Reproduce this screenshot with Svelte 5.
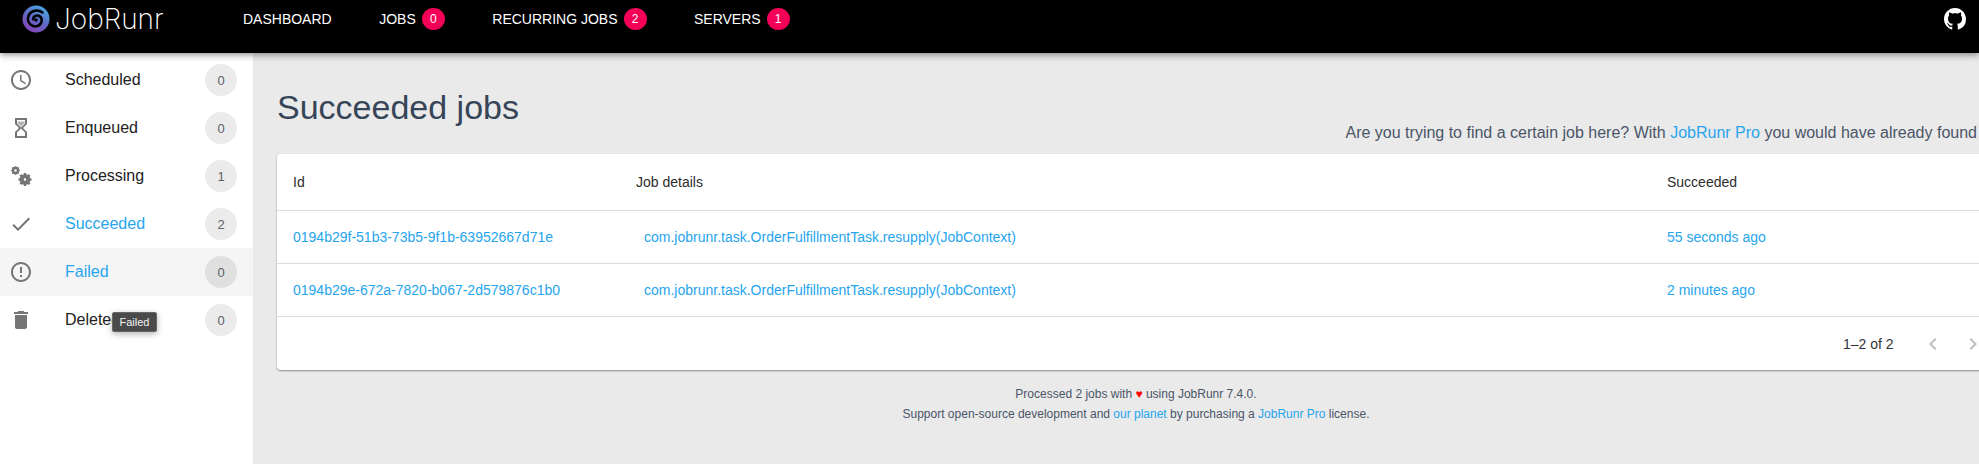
<script>
  const nav = [
    { label: 'DASHBOARD' },
    { label: 'JOBS', count: 0 },
    { label: 'RECURRING JOBS', count: 2 },
    { label: 'SERVERS', count: 1 }
  ];
  const side = [
    { label: 'Scheduled', count: 0, icon: 'clock' },
    { label: 'Enqueued', count: 0, icon: 'hourglass' },
    { label: 'Processing', count: 1, icon: 'cogs' },
    { label: 'Succeeded', count: 2, icon: 'check', active: true },
    { label: 'Failed', count: 0, icon: 'alert', active: true, hover: true },
    { label: 'Deleted', count: 0, icon: 'trash' }
  ];
  const rows = [
    { id: '0194b29f-51b3-73b5-9f1b-63952667d71e', when: '55 seconds ago' },
    { id: '0194b29e-672a-7820-b067-2d579876c1b0', when: '2 minutes ago' }
  ];
</script>

<div class="page">
  <header class="top">
    <div class="logo">
      <svg width="28" height="28" viewBox="0 0 28 28" fill="none">
        <defs>
          <linearGradient id="lg" x1="0.2" y1="1" x2="0.8" y2="0">
            <stop offset="0" stop-color="#8a3fb5" />
            <stop offset="0.5" stop-color="#5f68c4" />
            <stop offset="1" stop-color="#45aee6" />
          </linearGradient>
        </defs>
        <circle cx="14" cy="14" r="13.5" fill="url(#lg)" />
        <path d="M20.500 7.500C15.500 3.500 6.800 5.500 6 13c-.6 6 5 9.500 9.500 8 4.500-1.500 5.500-7 2.500-9.500-2.700-2.300-7-.5-6.800 2.800" stroke="#000" stroke-width="2.500" stroke-linecap="round" />
        <circle cx="14" cy="15" r="1.700" fill="#000" />
      </svg>
      <span class="wordmark">JobRunr</span>
    </div>
    <nav class="nav">
      {#each nav as n}
        <span class="navitem">{n.label}{#if n.count !== undefined}<span class="pill">{n.count}</span>{/if}</span>
      {/each}
    </nav>
    <svg class="gh" width="22" height="22" viewBox="0 0 16 16" fill="#fff"><path d="M8 0C3.58 0 0 3.58 0 8c0 3.54 2.29 6.53 5.47 7.59.4.07.55-.17.55-.38 0-.19-.01-.82-.01-1.49-2.01.37-2.53-.49-2.69-.94-.09-.23-.48-.94-.82-1.13-.28-.15-.68-.52-.01-.53.63-.01 1.08.58 1.23.82.72 1.21 1.87.87 2.33.66.07-.52.28-.87.51-1.07-1.78-.2-3.64-.89-3.64-3.95 0-.87.31-1.59.82-2.15-.08-.2-.36-1.02.08-2.12 0 0 .67-.21 2.2.82.64-.18 1.32-.27 2-.27s1.36.09 2 .27c1.53-1.04 2.2-.82 2.2-.82.44 1.1.16 1.92.08 2.12.51.56.82 1.27.82 2.15 0 3.07-1.87 3.75-3.65 3.95.29.25.54.73.54 1.48 0 1.07-.01 1.93-.01 2.2 0 .21.15.46.55.38A8.01 8.01 0 0 0 16 8c0-4.42-3.58-8-8-8z"/></svg>
  </header>

  <div class="body">
    <aside class="drawer">
      {#each side as s}
        <div class="item" class:hover={s.hover}>
          <span class="ico">
            {#if s.icon === 'clock'}
              <svg width="24" height="24" viewBox="0 0 24 24" fill="#757575"><path d="M11.99 2C6.47 2 2 6.48 2 12s4.47 10 9.99 10C17.52 22 22 17.52 22 12S17.52 2 11.99 2zM12 20c-4.42 0-8-3.58-8-8s3.58-8 8-8 8 3.58 8 8-3.58 8-8 8zm.5-13H11v6l5.25 3.15.75-1.23-4.5-2.67z"/></svg>
            {:else if s.icon === 'hourglass'}
              <svg width="24" height="24" viewBox="0 0 24 24" fill="#757575"><path d="M6 2v6h.01L6 8.01 10 12l-4 4 .01.01H6V22h12v-5.99h-.01L18 16l-4-4 4-3.99-.01-.01H18V2H6zm10 14.500V20H8v-3.500l4-4 4 4zm-4-5-4-4V4h8v3.500l-4 4z"/><path d="M8.500 5.500h7v1.500L12 10.500 8.500 7z" opacity=".55"/></svg>
            {:else if s.icon === 'cogs'}
              <svg width="24" height="24" viewBox="0 0 24 24" fill="#757575"><circle cx="6.500" cy="6.500" r="2.500" fill="none" stroke="#757575" stroke-width="2.400"/><path d="M6.500 2.200v1.500M6.500 9.300v1.500M2.200 6.500h1.500M9.300 6.500h1.500M3.400 3.400l1.100 1.100M8.500 8.500l1.100 1.100M3.400 9.600l1.100-1.100M8.500 4.500l1.100-1.100" stroke="#757575" stroke-width="1.700"/><circle cx="16" cy="15.500" r="3.300" fill="none" stroke="#757575" stroke-width="4"/><path d="M16 9v2.400M16 19.600V22M9.500 15.500h2.400M20.100 15.500h2.400M11.400 10.900l1.700 1.700M18.900 18.400l1.700 1.700M11.400 20.100l1.700-1.700M18.900 12.600l1.700-1.700" stroke="#757575" stroke-width="2.600"/></svg>
            {:else if s.icon === 'check'}
              <svg width="24" height="24" viewBox="0 0 24 24" fill="#757575"><path d="M9 16.170 4.830 12l-1.420 1.410L9 19 21 7l-1.410-1.410z"/></svg>
            {:else if s.icon === 'alert'}
              <svg width="24" height="24" viewBox="0 0 24 24" fill="#757575"><path d="M11 15h2v2h-2zm0-8h2v6h-2zm.99-5C6.470 2 2 6.480 2 12s4.470 10 9.990 10C17.520 22 22 17.520 22 12S17.520 2 11.990 2zM12 20c-4.420 0-8-3.580-8-8s3.580-8 8-8 8 3.580 8 8-3.580 8-8 8z"/></svg>
            {:else}
              <svg width="24" height="24" viewBox="0 0 24 24" fill="#757575"><path d="M6 19c0 1.100.9 2 2 2h8c1.100 0 2-.9 2-2V7H6v12zM19 4h-3.500l-1-1h-5l-1 1H5v2h14V4z"/></svg>
            {/if}
          </span>
          <span class="lbl" class:active={s.active}>{s.label}</span>
          <span class="cnt">{s.count}</span>
          {#if s.hover}<span class="tip">Failed</span>{/if}
        </div>
      {/each}
    </aside>

    <main class="main">
      <div class="head">
        <h1>Succeeded jobs</h1>
        <p class="promo">Are you trying to find a certain job here? With <a href="#p">JobRunr Pro</a> you would have already found</p>
      </div>
      <section class="card">
        <div class="row th">
          <span class="c1">Id</span><span class="c2">Job details</span><span class="c3">Succeeded</span>
        </div>
        {#each rows as r}
          <div class="row td">
            <span class="c1">{r.id}</span>
            <span class="c2 ind">com.jobrunr.task.OrderFulfillmentTask.resupply(JobContext)</span>
            <span class="c3">{r.when}</span>
          </div>
        {/each}
        <div class="pager">
          <span>1–2 of 2</span>
          <svg class="ch" width="24" height="24" viewBox="0 0 24 24" fill="#bdbdbd"><path d="M15.410 7.410 14 6l-6 6 6 6 1.410-1.410L10.830 12z"/></svg>
          <svg class="ch2" width="24" height="24" viewBox="0 0 24 24" fill="#bdbdbd"><path d="M10 6 8.590 7.410 13.170 12l-4.580 4.590L10 18l6-6z"/></svg>
        </div>
      </section>
      <footer class="foot">
        <div>Processed 2 jobs with <span class="heart">♥</span> using JobRunr 7.4.0.</div>
        <div>Support open-source development and <a href="#o">our planet</a> by purchasing a <a href="#j">JobRunr Pro</a> license.</div>
      </footer>
    </main>
  </div>
</div>

<style>
  :global(body) { margin: 0; overflow: hidden; }
  .page { width: 1979px; height: 464px; display: flex; flex-direction: column; font-family: "Liberation Sans", Arial, sans-serif; background: #eaeaea; overflow: hidden; }
  .top { position: relative; z-index: 3; height: 53px; flex: none; background: #000; color: #fff; display: flex; align-items: flex-start; box-shadow: 0 2px 4px -1px rgba(0,0,0,.2), 0 4px 5px rgba(0,0,0,.14), 0 1px 10px rgba(0,0,0,.12); }
  .logo { display: flex; align-items: center; margin: 5px 0 0 22px; width: 221px; gap: 5px; }
  .wordmark { font-family: "Inter", sans-serif; font-weight: 200; font-size: 28px; line-height: 28px; color: #fff; }
  .nav { display: flex; gap: 47.5px; margin-top: 8px; }
  .navitem { display: flex; align-items: center; font-size: 14px; height: 22px; gap: 6px; }
  .pill { width: 23px; height: 22px; border-radius: 50%; background: #f50057; color: #fff; font-size: 12px; display: flex; align-items: center; justify-content: center; }
  .gh { position: absolute; right: 13px; top: 8px; }
  .body { flex: 1; display: flex; min-height: 0; }
  .drawer { width: 253px; flex: none; background: #fff; padding-top: 3px; }
  .item { position: relative; height: 48px; display: flex; align-items: center; }
  .item.hover { background: #f5f5f5; }
  .ico { width: 65px; flex: none; display: flex; padding-left: 9px; box-sizing: border-box; }
  .lbl { flex: 1; font-size: 16px; color: #212121; }
  .lbl.active { color: #26a5ee; }
  .cnt { width: 32px; height: 32px; border-radius: 50%; background: #ebebeb; color: #616161; font-size: 13px; display: flex; align-items: center; justify-content: center; margin-right: 16px; }
  .item.hover .cnt { background: #e0e0e0; }
  .tip { position: absolute; left: 112px; top: 64px; width: 43px; height: 18px; background: #4a4a4a; border: 1px solid #666; color: #f2f2f2; font-size: 11px; display: flex; align-items: center; justify-content: center; border-radius: 2px; box-shadow: 0 2px 6px rgba(0,0,0,.3); z-index: 2; }
  .main { flex: 1; min-width: 0; padding-left: 24px; box-sizing: border-box; overflow: hidden; }
  .head { height: 101px; display: flex; justify-content: space-between; align-items: flex-end; padding-right: 2px; }
  h1 { margin: 0 0 27px; font-size: 34px; font-weight: 400; line-height: 40px; color: #374558; white-space: nowrap; }
  .promo { margin: 0 0 11px; white-space: nowrap; font-size: 16px; line-height: 20px; color: #4a5568; }
  .promo a, .foot a { color: #26a5ee; text-decoration: none; }
  .card { width: 1720px; background: #fff; border-radius: 4px 0 0 4px; box-shadow: 0 1px 2px rgba(0,0,0,.4); }
  .row { display: flex; align-items: center; border-bottom: 1px solid #dcdcdc; font-size: 14px; white-space: nowrap; }
  .th { height: 56px; color: #2d2d2d; }
  .td { height: 52px; color: #26a5ee; }
  .c1 { width: 359px; padding-left: 16px; box-sizing: border-box; flex: none; }
  .c2 { width: 1031px; flex: none; }
  .ind { padding-left: 8px; box-sizing: border-box; }
  .pager { height: 53px; display: flex; align-items: center; font-size: 14px; color: #333; padding-left: 1566px; }
  .ch { margin-left: 27px; }
  .ch2 { margin-left: 16px; }
  .foot { padding-top: 14px; width: 1718px; text-align: center; font-size: 12px; line-height: 20px; color: #4a5568; }
  .heart { color: #f00; }
</style>
